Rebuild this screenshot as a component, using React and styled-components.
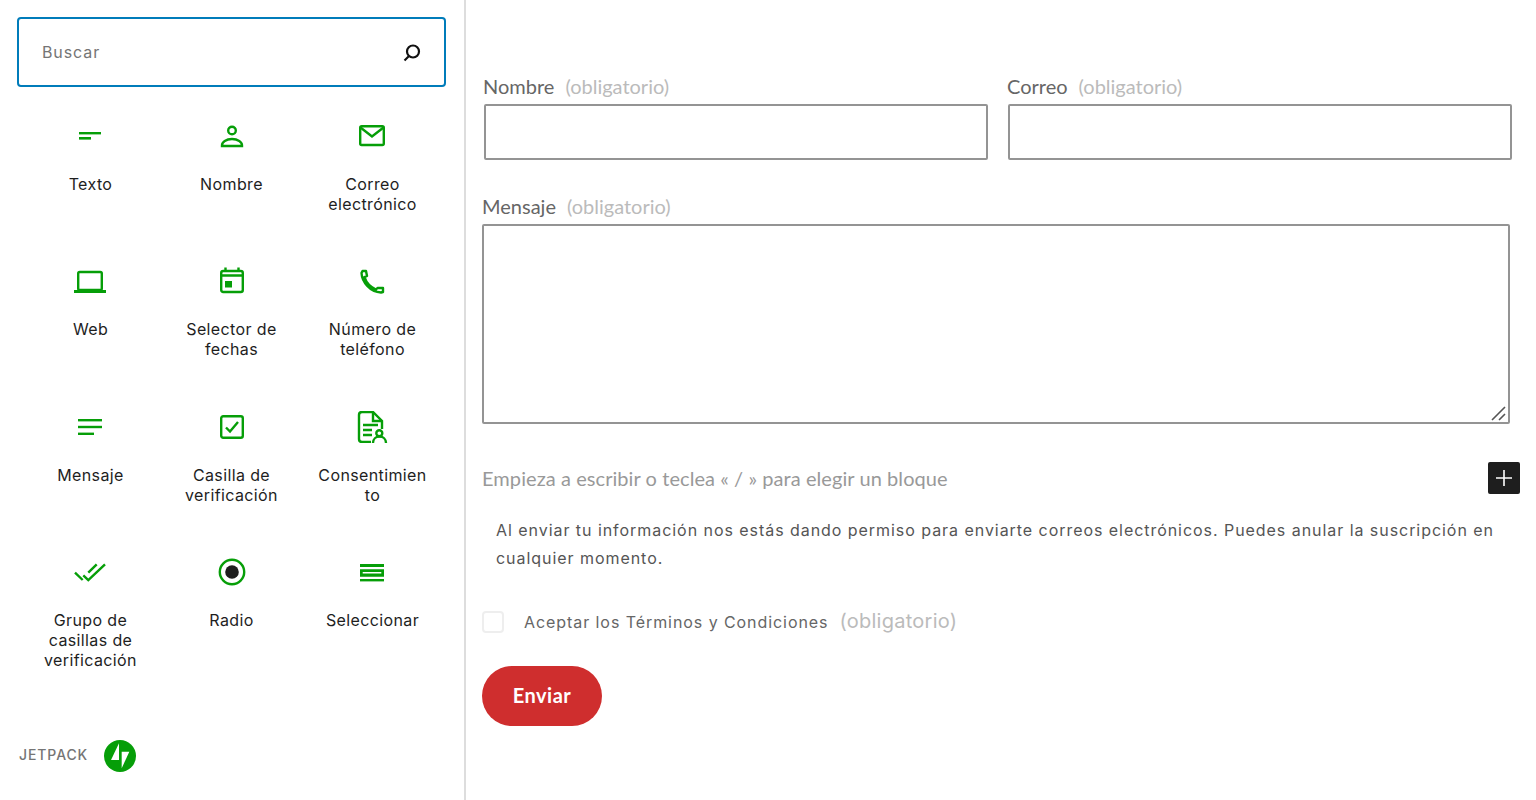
import React from 'react';
import styled, { createGlobalStyle } from 'styled-components';

const Global = createGlobalStyle`
  html, body { margin: 0; padding: 0; background: #fff; height: 100%; overflow: hidden; }
  * { box-sizing: border-box; }
`;

const Page = styled.div`
  display: flex;
  width: 1536px;
  height: 800px;
  background: #fff;
`;

const Sidebar = styled.aside`
  width: 466px;
  height: 800px;
  flex: none;
  border-right: 2px solid #ddd;
  padding: 17px 18px 0 17px;
  font-family: Inter, "Liberation Sans", sans-serif;
`;

const SearchBox = styled.div`
  display: flex;
  align-items: center;
  justify-content: space-between;
  height: 70px;
  width: 429px;
  border: 2px solid #007cba;
  border-radius: 4px;
  padding: 0 20px 0 23px;
  font-size: 16px;
  letter-spacing: 0.9px;
  color: #757575;
`;

const BlockGrid = styled.div`
  display: grid;
  grid-template-columns: repeat(3, 141px);
  grid-auto-rows: 145.33px;
  margin: 33px 0 0 3px;
`;

const BlockItem = styled.div`
  display: flex;
  flex-direction: column;
  align-items: center;
  text-align: center;
  width: 141px;
  padding: 0 16px;
`;

const BlockIcon = styled.svg`
  width: 32px;
  height: 32px;
  flex: none;
  margin-left: ${(p) => (p.$nudged ? -2 : 0)}px;
  fill: none;
  stroke: #069e08;
  stroke-width: 2.4;
`;

const BlockLabel = styled.span`
  margin-top: 22px;
  font-size: 16px;
  line-height: 20px;
  letter-spacing: 0.38px;
  color: #1e1e1e;
  word-break: break-word;
  width: 109px;
`;

const Provider = styled.div`
  display: flex;
  align-items: center;
  gap: 16px;
  margin: 38.7px 0 0 2px;
`;

const ProviderName = styled.span`
  margin-top: -3px;
  font-size: 14px;
  font-weight: 500;
  letter-spacing: 0.9px;
  color: #757575;
`;

const Editor = styled.main`
  flex: 1;
  min-width: 0;
  padding: 74px 16px 0 16px;
  font-family: Lato, "Liberation Sans", sans-serif;
`;

const FieldRow = styled.div`
  display: grid;
  grid-template-columns: 506px 506px;
  gap: 18px;
`;

const FieldLabel = styled.label`
  display: block;
  height: 30px;
  padding-left: ${(p) => (p.$flush ? 0 : 1)}px;
  font-size: 20px;
  line-height: 24px;
  color: #666;
`;

const Required = styled.span`
  margin-left: 11px;
  color: #bbb;
`;

const TextField = styled.div`
  height: 56px;
  margin: 0 0 0 2px;
  width: 504px;
  border: 2px solid #949494;
  border-radius: 2px;
`;

const MessageBlock = styled.div`
  margin-top: 34px;
`;

const MessageField = styled.div`
  position: relative;
  width: 1028px;
  height: 200px;
  border: 2px solid #949494;
  border-radius: 2px;
`;

const ResizeGrip = styled.svg`
  position: absolute;
  right: 0;
  bottom: 0;
  width: 18px;
  height: 18px;
  stroke: #555;
  stroke-width: 1.6;
`;

const Inserter = styled.div`
  display: flex;
  align-items: center;
  justify-content: space-between;
  height: 32px;
  margin: 38px 0 0 0;
  font-size: 20px;
  letter-spacing: 0.07px;
  color: #999;
`;

const PlusButton = styled.div`
  width: 32px;
  height: 32px;
  display: flex;
  align-items: center;
  justify-content: center;
  background: #1e1e1e;
  border-radius: 2px;
`;

const Notice = styled.p`
  margin: 22px 0 0 14px;
  width: 1010px;
  font-family: Inter, "Liberation Sans", sans-serif;
  font-size: 16px;
  line-height: 28px;
  letter-spacing: 0.95px;
  color: #555;
`;

const ConsentRow = styled.div`
  display: flex;
  align-items: center;
  margin-top: 38px;
  height: 24px;
  font-family: Inter, "Liberation Sans", sans-serif;
  letter-spacing: 0.93px;
  color: #666;
  font-size: 16px;
`;

const FakeCheck = styled.span`
  width: 22px;
  height: 22px;
  border: 2px solid #eee;
  border-radius: 4px;
  margin-right: 20px;
`;

const ConsentRequired = styled.span`
  margin: -2px 0 0 11px;
  color: #bbb;
  font-size: 20px;
  letter-spacing: 0.25px;
`;

const SubmitButton = styled.div`
  display: flex;
  align-items: center;
  justify-content: center;
  width: 120px;
  height: 60px;
  margin-top: 32px;
  padding-bottom: 3px;
  background: #cf2e2e;
  border-radius: 30px;
  color: #fff;
  font-size: 20px;
  font-weight: 700;
  letter-spacing: 0.45px;
`;

const G = '#069e08';

const icons = {
  text: <g fill={G} stroke="none"><rect x="5" y="12" width="22" height="2.4" /><rect x="5" y="17" width="12" height="2.6" /></g>,
  person: <><circle cx="16" cy="10.5" r="3.8" /><path d="M6 26v-.8C6 22 10 19 16 19s10 3 10 6.2v.8z" /></>,
  mail: <><rect x="4.200" y="6.200" width="23.600" height="18.800" rx="1.500" /><path d="M4.500 7.500 16 16.500 27.500 7.500" /></>,
  laptop: <><rect x="4.200" y="7" width="23.600" height="18" rx="1.500" /><rect x="0" y="25" width="32" height="3" fill={G} stroke="none" /></>,
  calendar: <><rect x="5.200" y="6" width="21.600" height="21" rx="2" /><path d="M5 10.500h22M9.500 2.500V6M22.500 2.500V6" /><rect x="9" y="16" width="7" height="6.500" fill={G} stroke="none" /></>,
  phone: <path d="M6.500 6H10l1 5-2.500 1.200C10 17 14 22 20 24.500l1.500-1.500H27v4l-2 .5C14 27 6 17 5.500 8z" strokeLinejoin="round" />,
  lines: <g fill={G} stroke="none"><rect x="4" y="8" width="24" height="2.400" /><rect x="4" y="14.800" width="24" height="2.400" /><rect x="4" y="21.600" width="16" height="2.400" /></g>,
  checkbox: <><rect x="5.200" y="5.200" width="21.600" height="21.600" rx="2" /><path d="m10 16.500 4 4 8-9.500" /></>,
  consent: <><path d="M15 31H6c-1.700 0-3-1.300-3-3V4c0-1.700 1.300-3 3-3h11l9 9v8" /><path d="M17 1v9h9" /><path d="M7 14h15M7 19h9M7 24h9" /><circle cx="23.300" cy="22.300" r="3" /><path d="M17 32c0-4 3-6.500 6.500-6.500S30 28 30 32" /></>,
  group: <path d="m1 16.700 7.700 7.300M9.300 19.300l5 4.700L31 8.300M14.300 16.700l8.400-8.400" />,
  radio: <><circle cx="16" cy="16" r="12.200" /><circle cx="16" cy="16" r="6.800" fill="#1e1e1e" stroke="none" /></>,
  select: <g fill={G} stroke="none"><rect x="4" y="8" width="24" height="3" /><path fillRule="evenodd" d="M4 13.300h24v7.400H4zM6.700 16v1.400h18.600V16z" /><rect x="4" y="23" width="24" height="2.400" /></g>,
};

const blocks = [
  ['text', 'Texto'],
  ['person', 'Nombre'],
  ['mail', 'Correo electrónico'],
  ['laptop', 'Web'],
  ['calendar', 'Selector de fechas'],
  ['phone', 'Número de teléfono'],
  ['lines', 'Mensaje'],
  ['checkbox', 'Casilla de verificación'],
  ['consent', 'Consentimiento'],
  ['group', 'Grupo de casillas de verificación'],
  ['radio', 'Radio'],
  ['select', 'Seleccionar'],
];

const SearchIcon = () => (
  <svg width="24" height="24" viewBox="0 0 24 24" fill="none" stroke="#111" strokeWidth="2.200">
    <circle cx="13" cy="11.500" r="6" />
    <path d="M9 16 4.500 20.500" />
  </svg>
);

const JetpackLogo = () => (
  <svg width="32" height="32" viewBox="0 0 32 32">
    <circle cx="16" cy="16" r="16" fill="#069e08" />
    <path d="M15 3.300V20H7z" fill="#fff" />
    <path d="M17.700 28.300V11.700h7.600z" fill="#fff" />
  </svg>
);

export default function App() {
  return (
    <Page>
      <Global />
      <Sidebar>
        <SearchBox>
          <span>Buscar</span>
          <SearchIcon />
        </SearchBox>
        <BlockGrid>
          {blocks.map(([icon, label], i) => (
            <BlockItem key={label}>
              <BlockIcon viewBox="0 0 32 32" $nudged={i % 3 !== 1}>{icons[icon]}</BlockIcon>
              <BlockLabel>{label}</BlockLabel>
            </BlockItem>
          ))}
        </BlockGrid>
        <Provider>
          <ProviderName>JETPACK</ProviderName>
          <JetpackLogo />
        </Provider>
      </Sidebar>
      <Editor>
        <FieldRow>
          <div>
            <FieldLabel>Nombre<Required>(obligatorio)</Required></FieldLabel>
            <TextField />
          </div>
          <div>
            <FieldLabel>Correo<Required>(obligatorio)</Required></FieldLabel>
            <TextField />
          </div>
        </FieldRow>
        <MessageBlock>
          <FieldLabel $flush>Mensaje<Required>(obligatorio)</Required></FieldLabel>
          <MessageField>
            <ResizeGrip viewBox="0 0 18 18">
              <path d="M2 16 15 3M9 16l6-6" />
            </ResizeGrip>
          </MessageField>
        </MessageBlock>
        <Inserter>
          <span>Empieza a escribir o teclea « / » para elegir un bloque</span>
          <PlusButton>
            <svg width="16" height="16" viewBox="0 0 16 16" stroke="#fff" strokeWidth="1.600"><path d="M8 0v16M0 8h16" /></svg>
          </PlusButton>
        </Inserter>
        <Notice>Al enviar tu información nos estás dando permiso para enviarte correos electrónicos. Puedes anular la suscripción en cualquier momento.</Notice>
        <ConsentRow>
          <FakeCheck />
          <span>Aceptar los Términos y Condiciones</span>
          <ConsentRequired>(obligatorio)</ConsentRequired>
        </ConsentRow>
        <SubmitButton>Enviar</SubmitButton>
      </Editor>
    </Page>
  );
}
